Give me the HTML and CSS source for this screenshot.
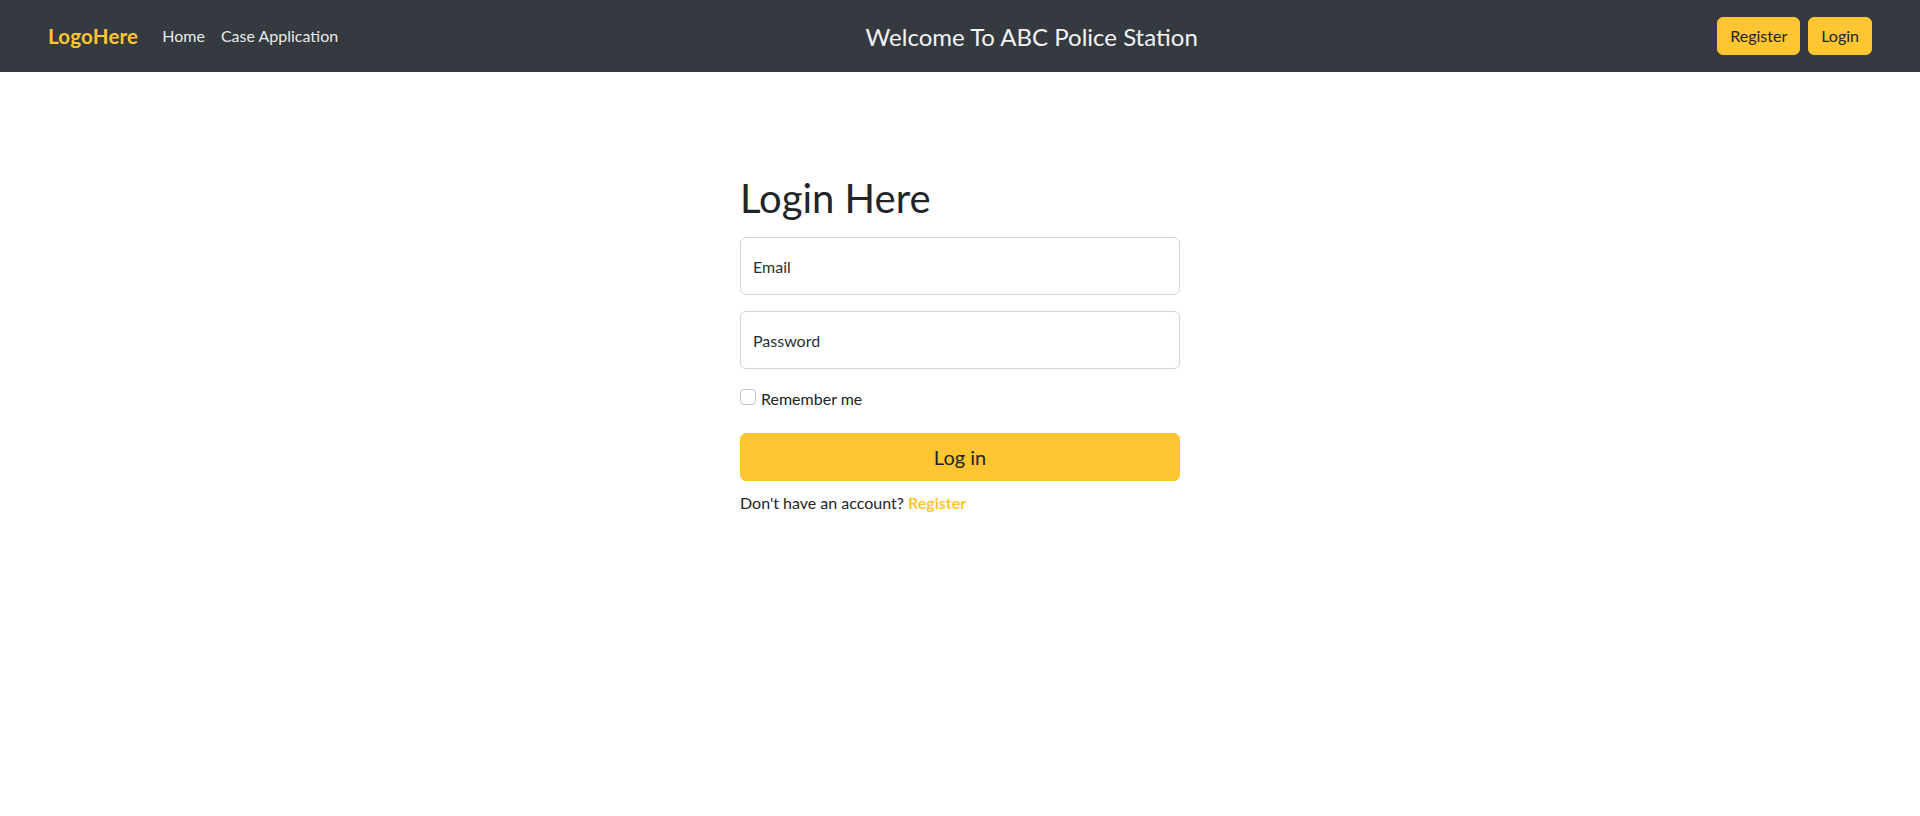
FILE: index.html
```html
<!DOCTYPE html>
<html lang="en">
<head>
<meta charset="utf-8">
<title>ABC Police Station</title>
<link rel="stylesheet" href="styles.css">
</head>
<body>
<header class="navbar">
  <a class="brand" href="#">LogoHere</a>
  <nav class="nav">
    <a class="nav-link" href="#">Home</a>
    <a class="nav-link" href="#">Case Application</a>
  </nav>
  <div class="title">Welcome To ABC Police Station</div>
  <div class="actions">
    <a class="btn" href="#">Register</a>
    <a class="btn" href="#">Login</a>
  </div>
</header>
<main class="main">
  <form class="login">
    <h1 class="heading">Login Here</h1>
    <input class="field" type="email" placeholder="Email">
    <input class="field field-gap" type="password" placeholder="Password">
    <label class="check-row"><input class="check" type="checkbox"><span>Remember me</span></label>
    <button class="submit" type="button">Log in</button>
    <p class="note">Don't have an account? <a class="link" href="#">Register</a></p>
  </form>
</main>
</body>
</html>
```
FILE: styles.css
```css
* { box-sizing: border-box; }
html, body { margin: 0; padding: 0; }
body {
  font-family: Lato, "Liberation Sans", sans-serif;
  font-size: 16px;
  line-height: 24px;
  color: #212529;
  background: #fff;
}
a { text-decoration: none; }

.navbar {
  display: flex;
  align-items: center;
  height: 72px;
  padding: 0 48px;
  background: #343a40;
}
.brand {
  color: #ffc631;
  font-weight: 700;
  font-size: 20.5px;
  line-height: 30px;
  margin-right: 16px;
  letter-spacing: 0.2px;
}
.nav { display: flex; }
.nav-link {
  color: rgba(255,255,255,0.92);
  padding: 8px;
  font-size: 16px;
}
.title {
  margin: 0 auto;
  color: #f3f3f3;
  font-size: 24px;
  line-height: 29px;
}
.actions { display: flex; gap: 8px; }
.btn {
  display: inline-block;
  height: 38px;
  padding: 6px 12px;
  border: 1px solid #ffc631;
  border-radius: 6px;
  background: #ffc631;
  color: #212529;
  font-size: 16px;
  line-height: 24px;
}

.main {
  display: flex;
  justify-content: center;
  padding-top: 102px;
}
.login {
  width: 440px;
  display: flex;
  flex-direction: column;
}
.heading {
  margin: 0 0 15px;
  font-size: 40px;
  line-height: 48px;
  font-weight: 400;
}
.field {
  display: block;
  width: 100%;
  height: 58px;
  padding: 16px 12px;
  border: 1px solid #ced4da;
  border-radius: 6px;
  font-family: inherit;
  font-size: 16px;
  color: #212529;
  background: #fff;
}
.field::placeholder { color: #2b2f33; opacity: 1; }
.field-gap { margin-top: 16px; }
.check-row {
  display: flex;
  align-items: flex-start;
  margin-top: 18px;
  height: 24px;
  gap: 5px;
}
.check {
  appearance: none;
  -webkit-appearance: none;
  margin: 2px 0 0;
  width: 16px;
  height: 16px;
  border: 1px solid #bfc4c9;
  border-radius: 4px;
  background: #fff;
}
.submit {
  margin-top: 22px;
  height: 48px;
  width: 100%;
  border: 1px solid #ffc631;
  border-radius: 6px;
  background: #ffc631;
  color: #212529;
  font-family: inherit;
  font-size: 20px;
  line-height: 30px;
}
.note {
  margin: 10px 0 0;
  font-size: 16px;
  line-height: 24px;
}
.link {
  color: #ffc631;
  font-weight: 700;
}
```
